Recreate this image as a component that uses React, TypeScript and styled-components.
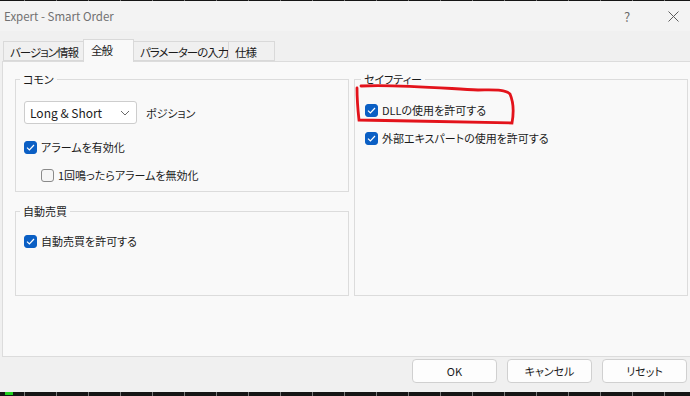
import React from 'react'
import styled, { createGlobalStyle } from 'styled-components'

const GlobalStyle = createGlobalStyle`
  html, body {
    margin: 0;
    padding: 0;
    background: #f0f0f0;
  }
  body {
    font-family: "Noto Sans CJK JP", "Noto Sans", sans-serif;
    font-feature-settings: "palt";
    color: #1b1b1b;
  }
`

const TABS = [
  { label: 'バージョン情報', width: 81 },
  { label: '全般', width: 51, active: true },
  { label: 'パラメーターの入力', width: 96 },
  { label: '仕様', width: 47 },
]

function CheckBox({ checked }: { checked: boolean }) {
  return (
    <Box $checked={checked}>
      {checked && (
        <svg width="9" height="7" viewBox="0 0 9 7">
          <path d="M1 3.6 L3.4 6 L8 1" fill="none" stroke="#fff" strokeWidth="1.2" />
        </svg>
      )}
    </Box>
  )
}

function Check({ label, checked, indent = 0 }: { label: string, checked: boolean, indent?: number }) {
  return (
    <CheckRow $indent={indent}>
      <CheckBox checked={checked} />
      <span>{label}</span>
    </CheckRow>
  )
}

export default function App() {
  return (
    <Window>
      <GlobalStyle />
      <TickStrip $h={1} />

      <TitleBar>
        <span>Expert - Smart Order</span>
        <CaptionButtons>
          <CaptionButton>?</CaptionButton>
          <CaptionButton>
            <svg width="11" height="11" viewBox="0 0 11 11">
              <path d="M0.5 0.5 L10.5 10.5 M10.5 0.5 L0.5 10.5" stroke="#5c5c5c" strokeWidth="1" />
            </svg>
          </CaptionButton>
        </CaptionButtons>
      </TitleBar>

      <TabBar>
        {TABS.map(tab => (
          <Tab key={tab.label} $active={!!tab.active} $width={tab.width}>{tab.label}</Tab>
        ))}
      </TabBar>

      <Panel>
        <Column>
          <Group $height={121} $pad="14px 8px 0 8px">
            <Legend>コモン</Legend>
            <ComboRow>
              <Combo>
                <span>Long &amp; Short</span>
                <svg width="10" height="6" viewBox="0 0 10 6">
                  <path d="M1 1 L5 5 L9 1" fill="none" stroke="#6a6a6a" strokeWidth="1" />
                </svg>
              </Combo>
              <span>ポジション</span>
            </ComboRow>
            <Stack $gap={10} $top={14}>
              <Check label="アラームを有効化" checked />
              <Check label="1回鳴ったらアラームを無効化" checked={false} indent={17} />
            </Stack>
          </Group>

          <Group $height={93} $pad="13px 8px 0 8px">
            <Legend>自動売買</Legend>
            <Check label="自動売買を許可する" checked />
          </Group>
        </Column>

        <Group $height={225} $pad="14px 10px 0 10px">
          <Legend>セイフティー</Legend>
          <Stack $gap={10} $top={0}>
            <Check label="DLLの使用を許可する" checked />
            <Check label="外部エキスパートの使用を許可する" checked />
          </Stack>
        </Group>
      </Panel>

      <Footer>
        <Button>OK</Button>
        <Button>キャンセル</Button>
        <Button>リセット</Button>
      </Footer>

      <TickStrip $h={4}>
        <Marker />
      </TickStrip>

      <Annotation width="690" height="396" viewBox="0 0 690 396">
        <path
          d="M357 88 C 357 100, 358 111, 359 120 C 410 121, 470 122, 512 123 C 514 112, 513 101, 510 94 C 505 89, 494 90, 478 90 C 440 88, 392 84, 361 86"
          fill="none"
          stroke="#e3131b"
          strokeWidth="2.8"
          strokeLinecap="round"
        />
      </Annotation>
    </Window>
  )
}

const Window = styled.div`
  position: relative;
  width: 690px;
  height: 396px;
  overflow: hidden;
  display: flex;
  flex-direction: column;
  font-size: 11px;
`

const TickStrip = styled.div<{ $h: number }>`
  position: relative;
  height: ${({ $h }) => $h}px;
  flex: none;
  background-color: #151515;
  background-image: repeating-linear-gradient(
    to right,
    transparent 0 24px,
    #7a7a7a 24px 25px,
    transparent 25px 32px
  );
`

const Marker = styled.span`
  position: absolute;
  left: 5px;
  top: 0;
  width: 8px;
  height: 3px;
  background: #1fd21f;
`

const TitleBar = styled.div`
  height: 30px;
  flex: none;
  display: flex;
  align-items: center;
  padding-left: 4px;
  background: #f3f3f3;
  color: #717171;
  font-size: 11.5px;
`

const CaptionButtons = styled.div`
  margin-left: auto;
  margin-right: -6px;
  display: flex;
`

const CaptionButton = styled.div`
  width: 46px;
  height: 30px;
  display: flex;
  align-items: center;
  justify-content: center;
  color: #6a6a6a;
  font-size: 13px;
`

const TabBar = styled.div`
  height: 30px;
  flex: none;
  display: flex;
  align-items: flex-end;
  padding-left: 3px;
  background: #f0f0f0;
`

const Tab = styled.div<{ $active: boolean, $width: number }>`
  position: relative;
  box-sizing: border-box;
  width: ${({ $width }) => $width}px;
  height: ${({ $active }) => ($active ? 23 : 20)}px;
  margin-left: -1px;
  margin-bottom: ${({ $active }) => ($active ? -1 : 0)}px;
  padding: ${({ $active }) => ($active ? '2px 0 0 7px' : '2px 0 0 6px')};
  border: 1px solid #d9d9d9;
  border-bottom: ${({ $active }) => ($active ? 'none' : '1px solid #d9d9d9')};
  background: ${({ $active }) => ($active ? '#f9f9f9' : '#f0f0f0')};
  z-index: ${({ $active }) => ($active ? 1 : 0)};
  font-size: 11.5px;
  letter-spacing: -1px;
  line-height: 16px;
  white-space: nowrap;
  overflow: hidden;

  &:first-child {
    margin-left: 0;
  }
`

const Panel = styled.div`
  box-sizing: border-box;
  height: 296px;
  flex: none;
  margin: 0 -6px 0 2px;
  padding: 9px 0 0 12px;
  border: 1px solid #dcdcdc;
  background: #f9f9f9;
  display: grid;
  grid-template-columns: 334px 334px;
  column-gap: 5px;
  align-content: start;
`

const Column = styled.div`
  display: flex;
  flex-direction: column;
  gap: 11px;
`

const Group = styled.fieldset<{ $height: number, $pad: string }>`
  box-sizing: border-box;
  height: ${({ $height }) => $height}px;
  min-width: 0;
  margin: 0;
  padding: ${({ $pad }) => $pad};
  border: 1px solid #dcdcdc;
`

const Legend = styled.legend`
  margin-left: -4px;
  padding: 0 3px;
  line-height: 16px;
`

const ComboRow = styled.div`
  display: flex;
  align-items: center;
  gap: 9px;
`

const Combo = styled.div`
  box-sizing: border-box;
  width: 113px;
  height: 23px;
  display: flex;
  align-items: center;
  justify-content: space-between;
  padding: 0 6px 0 5px;
  border: 1px solid #cdcdcd;
  border-radius: 3px;
  background: #fff;
  font-size: 12px;
`

const Stack = styled.div<{ $gap: number, $top: number }>`
  display: flex;
  flex-direction: column;
  gap: ${({ $gap }) => $gap}px;
  margin-top: ${({ $top }) => $top}px;
`

const CheckRow = styled.div<{ $indent: number }>`
  height: 18px;
  display: flex;
  align-items: center;
  gap: 4px;
  margin-left: ${({ $indent }) => $indent}px;
`

const Box = styled.span<{ $checked: boolean }>`
  box-sizing: border-box;
  width: 13px;
  height: 13px;
  flex: none;
  display: flex;
  align-items: center;
  justify-content: center;
  border-radius: 3px;
  border: 1px solid ${({ $checked }) => ($checked ? '#0b5fc4' : '#8a8a8a')};
  background: ${({ $checked }) => ($checked ? '#0b5fc4' : '#f5f5f5')};
`

const Footer = styled.div`
  height: 35px;
  flex: none;
  box-sizing: border-box;
  display: flex;
  justify-content: flex-end;
  align-items: flex-start;
  gap: 10px;
  padding: 2px 3px 0 0;
  background: #f0f0f0;
`

const Button = styled.div`
  box-sizing: border-box;
  width: 85px;
  height: 24px;
  display: flex;
  align-items: center;
  justify-content: center;
  border: 1px solid #d0d0d0;
  border-radius: 4px;
  background: #fdfdfd;
`

const Annotation = styled.svg`
  position: absolute;
  left: 0;
  top: 0;
  pointer-events: none;
`
